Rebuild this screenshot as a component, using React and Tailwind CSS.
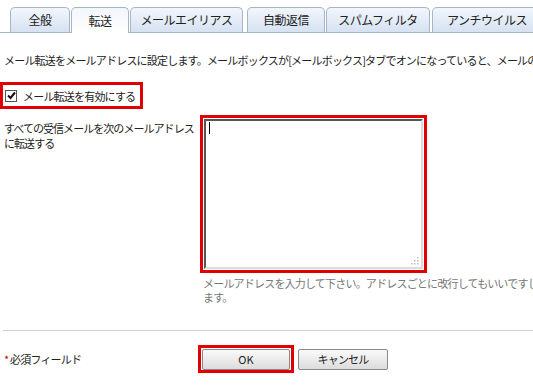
const tabs = [
  { label: '全般', w: 'w-[60px]', ml: 'ml-[10px]' },
  { label: '転送', w: 'w-[58px]', ml: 'ml-[1px]', active: true },
  { label: 'メールエイリアス', w: 'w-[113px]', ml: 'ml-[1px]' },
  { label: '自動返信', w: 'w-[78px]', ml: 'ml-[4px]' },
  { label: 'スパムフィルタ', w: 'w-[104px]', ml: 'ml-[1px]' },
  { label: 'アンチウイルス', w: 'w-[110px]', ml: 'ml-[2px]' },
];

function Tab({ tab }) {
  if (tab.active) {
    return (
      <div className={`${tab.ml} ${tab.w} mb-[-1px] flex h-[26px] shrink-0 items-center justify-center rounded-t-[5px] border border-b-0 border-[#a7b5c9] bg-[linear-gradient(#f3f6fb,#ffffff)] pt-[1px] text-[12px] tracking-[-0.5px] text-[#222]`}>
        {tab.label}
      </div>
    );
  }
  return (
    <div className={`${tab.ml} ${tab.w} flex h-[25px] shrink-0 items-center justify-center rounded-t-[5px] border border-b-0 border-[#a7b5c9] bg-[linear-gradient(#f2f6fc,#d6e2f2)] text-[12px] tracking-[-0.5px] text-[#222]`}>
      {tab.label}
    </div>
  );
}

export default function App() {
  return (
    <div className="h-[386px] w-[533px] overflow-hidden bg-white text-[11px] leading-[14px] tracking-[-0.8px] text-[#222] [font-family:'Noto_Sans_CJK_JP','Noto_Sans',sans-serif]">
      <div className="flex h-[33px] items-end border-b border-[#a7b5c9]">
        {tabs.map((tab) => (
          <Tab key={tab.label} tab={tab} />
        ))}
      </div>

      <div className="ml-[4px] mt-[20px] whitespace-nowrap">
        メール転送をメールアドレスに設定します。メールボックスが[メールボックス]タブでオンになっていると、メールのコ
      </div>

      <div className="mt-[15px] flex h-[27px] w-[143px] items-center border-[3px] border-[#e00000] pl-[2px]">
        <div className="flex h-[12px] w-[12px] items-center justify-center border border-[#555] bg-white">
          <svg width="9" height="9" viewBox="0 0 9 9">
            <path d="M1 4.5 L3.5 7 L8 1.5" fill="none" stroke="#111" strokeWidth="2" />
          </svg>
        </div>
        <span className="ml-[6px]">メール転送を有効にする</span>
      </div>

      <div className="mt-[6px] flex">
        <div className="ml-[4px] mt-[6px] w-[196px] whitespace-nowrap leading-[15px] tracking-[-0.95px]">
          すべての受信メールを次のメールアドレス
          <br />
          に転送する
        </div>
        <div className="flex flex-col">
          <div className="h-[158px] w-[227px] border-[3px] border-[#e00000] p-px">
            <div className="relative h-full w-full border-2 border-b-[#ddd] border-l-[#555] border-r-[#ddd] border-t-[#555] bg-white">
              <div className="ml-[3px] mt-[1px] h-[12px] w-px bg-black" />
              <svg className="absolute bottom-[2px] right-[2px]" width="9" height="9" viewBox="0 0 9 9">
                <rect x="7" y="1" width="1.5" height="1.5" fill="#bbb" />
                <rect x="4" y="4" width="1.5" height="1.5" fill="#bbb" />
                <rect x="7" y="4" width="1.5" height="1.5" fill="#bbb" />
                <rect x="1" y="7" width="1.5" height="1.5" fill="#bbb" />
                <rect x="4" y="7" width="1.5" height="1.5" fill="#bbb" />
                <rect x="7" y="7" width="1.5" height="1.5" fill="#bbb" />
              </svg>
            </div>
          </div>
          <div className="ml-[3px] mt-[3px] w-[330px] leading-[14px] text-[#777]">
            <div className="whitespace-nowrap">メールアドレスを入力して下さい。アドレスごとに改行してもいいですし、空</div>
            <div>ます。</div>
          </div>
        </div>
      </div>

      <div className="ml-[3px] mt-[26px] border-t border-[#cfcfcf]" />

      <div className="mt-[14px] flex items-center">
        <div className="ml-[4px] w-[194px]">
          <span className="text-[#c00]">*</span> 必須フィールド
        </div>
        <div className="flex h-[28px] w-[96px] items-center justify-center border-[3px] border-[#e00000]">
          <button type="button" className="h-[21px] w-[88px] rounded-[2px] border border-[#8a8a8a] bg-[linear-gradient(#fafafa,#dcdcdc)] text-[11px] tracking-normal text-[#222]">
            OK
          </button>
        </div>
        <button type="button" className="ml-[4px] h-[21px] w-[90px] rounded-[2px] border border-[#8a8a8a] bg-[linear-gradient(#fafafa,#dcdcdc)] text-[11px] text-[#222]">
          キャンセル
        </button>
      </div>
    </div>
  );
}
